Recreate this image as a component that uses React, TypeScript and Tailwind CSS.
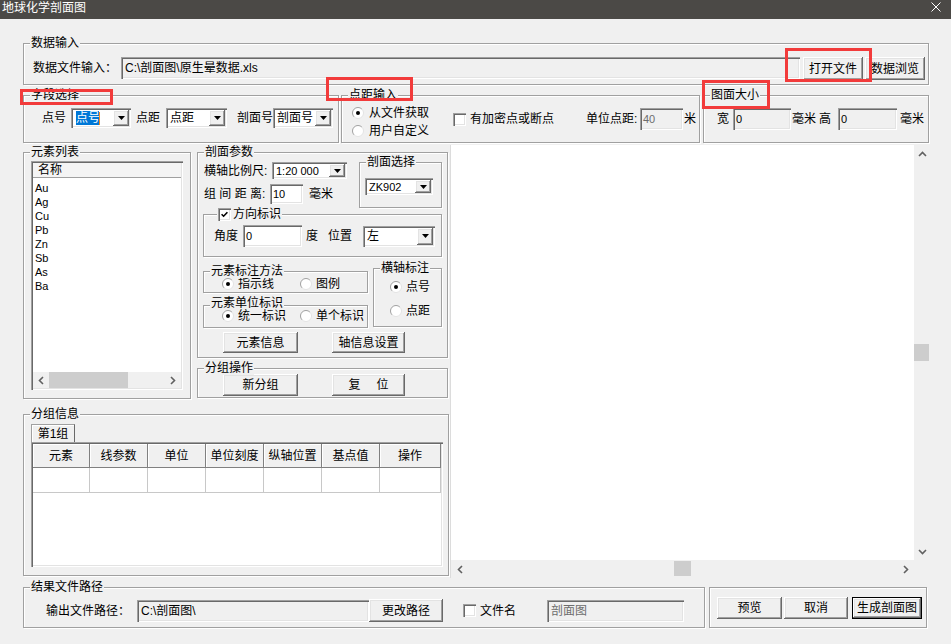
import React from 'react'

const RAISED = 'bg-[#f0f0f0] shadow-[inset_-1px_-1px_0_#696969,inset_1px_1px_0_#ffffff,inset_-2px_-2px_0_#a0a0a0,inset_2px_2px_0_#e3e3e3]'
const SUNKEN = 'shadow-[inset_1px_1px_0_#a0a0a0,inset_2px_2px_0_#696969,inset_-1px_-1px_0_#ffffff,inset_-2px_-2px_0_#e3e3e3]'

type Kids = { children?: React.ReactNode; className?: string }

function Group({ label, left = 'left-[6px]', top = '-top-[8px] h-[14px]', className = '', children }: Kids & { label?: React.ReactNode; left?: string; top?: string }) {
  return (
    <div className={`relative shrink-0 border border-[#a0a0a0] shadow-[inset_1px_1px_0_#ffffff,1px_1px_0_#ffffff] ${className}`}>
      {label && (
        <div className={`absolute ${top} ${left} flex items-center bg-[#f0f0f0] px-[1px] whitespace-nowrap`}>{label}</div>
      )}
      {children}
    </div>
  )
}

function Btn({ children, className = '' }: Kids) {
  return <div className={`shrink-0 flex items-center justify-center whitespace-nowrap ${RAISED} ${className}`}>{children}</div>
}

function Edit({ children, className = '', gray = false, dim = false }: Kids & { gray?: boolean; dim?: boolean }) {
  return (
    <div className={`shrink-0 flex items-center px-[4px] whitespace-nowrap overflow-hidden ${SUNKEN} ${gray ? 'bg-[#f0f0f0]' : 'bg-white'} ${dim ? 'text-[#6d6d6d]' : ''} ${className}`}>
      {children}
    </div>
  )
}

function Combo({ children, className = '' }: Kids) {
  return (
    <div className={`shrink-0 flex items-stretch bg-white p-[2px] ${SUNKEN} ${className}`}>
      <div className="flex-1 flex items-center pl-[2px] overflow-hidden whitespace-nowrap">{children}</div>
      <div className={`w-[16px] flex items-center justify-center ${RAISED}`}>
        <svg width="7" height="4" viewBox="0 0 7 4"><path d="M0 0h7L3.5 4z" fill="#000" /></svg>
      </div>
    </div>
  )
}

function Radio({ on = false }: { on?: boolean }) {
  return (
    <svg width="12" height="12" viewBox="0 0 12 12" className="shrink-0">
      <circle cx="6" cy="6" r="5.5" fill="#fff" />
      <path d="M2.1 9.9A5.5 5.5 0 0 1 9.9 2.1" stroke="#a0a0a0" fill="none" />
      <path d="M9.9 2.1A5.5 5.5 0 0 1 2.1 9.9" stroke="#e3e3e3" fill="none" />
      {on && <circle cx="6" cy="6" r="2" fill="#000" />}
    </svg>
  )
}

function Check({ on = false }: { on?: boolean }) {
  return (
    <div className={`w-[13px] h-[13px] shrink-0 bg-white flex items-center justify-center ${SUNKEN}`}>
      {on && (
        <svg width="7" height="7" viewBox="0 0 7 7"><path d="M0.6 3.2l2 2L6.4 1.2" stroke="#000" strokeWidth="1.6" fill="none" /></svg>
      )}
    </div>
  )
}

function Chev({ dir }: { dir: 'up' | 'down' | 'left' | 'right' }) {
  if (dir === 'up') return <svg width="9" height="6" viewBox="0 0 9 6"><path d="M1 5L4.5 1.5L8 5" stroke="#606060" strokeWidth="1.6" fill="none" /></svg>
  if (dir === 'down') return <svg width="9" height="6" viewBox="0 0 9 6"><path d="M1 1L4.5 4.5L8 1" stroke="#606060" strokeWidth="1.6" fill="none" /></svg>
  if (dir === 'left') return <svg width="6" height="9" viewBox="0 0 6 9"><path d="M5 1L1.5 4.5L5 8" stroke="#606060" strokeWidth="1.6" fill="none" /></svg>
  return <svg width="6" height="9" viewBox="0 0 6 9"><path d="M1 1L4.5 4.5L1 8" stroke="#606060" strokeWidth="1.6" fill="none" /></svg>
}

const elements = ['Au', 'Ag', 'Cu', 'Pb', 'Zn', 'Sb', 'As', 'Ba']
const columns = [
  { name: '元素', w: 'w-[57px]' },
  { name: '线参数', w: 'w-[58px]' },
  { name: '单位', w: 'w-[58px]' },
  { name: '单位刻度', w: 'w-[58px]' },
  { name: '纵轴位置', w: 'w-[58px]' },
  { name: '基点值', w: 'w-[58px]' },
  { name: '操作', w: 'w-[61px]' },
]

export default function App() {
  return (
    <div className="relative w-[951px] h-[644px] overflow-hidden bg-[#f0f0f0] text-[12px] leading-[14px] text-black font-['Liberation_Sans','Noto_Sans_CJK_SC',sans-serif]">
      {/* title bar */}
      <div className="h-[19px] bg-[#4b4946] text-white flex items-start pl-[2px] pt-[1px]">
        <span>地球化学剖面图</span>
        <svg className="ml-auto mr-[10px] mt-[1px]" width="10" height="10" viewBox="0 0 10 10">
          <path d="M0.5 0.5L9.5 9.5M9.5 0.5L0.5 9.5" stroke="#fff" strokeWidth="1" />
        </svg>
      </div>

      <div className="pl-[23px]">
        {/* 数据输入 */}
        <Group label="数据输入" className="mt-[24px] w-[906px] h-[42px] flex items-start pl-[9px] pt-[13px]">
          <span className="w-[88px] h-[22px] flex items-center shrink-0">数据文件输入：</span>
          <Edit gray className="w-[679px] h-[22px]">C:\剖面图\原生晕数据.xls</Edit>
          <Btn className="ml-[3px] w-[60px] h-[23px]">打开文件</Btn>
          <Btn className="ml-[2px] w-[60px] h-[23px]">数据浏览</Btn>
        </Group>

        {/* 字段 / 点距 / 图面 */}
        <div className="flex mt-[10px]">
          <Group label="字段选择" className="w-[316px] h-[48px] flex items-start pl-[18px] pt-[12px]">
            <div className="flex items-center h-[20px]">
              <span>点号</span>
              <Combo className="ml-[5px] w-[60px] h-[20px]">
                <span className="bg-[#0078d7] text-white w-[23px] ml-[1px]">点号</span>
                <span className="w-[1px] h-[13px] bg-[#f08a24]" />
              </Combo>
              <span className="ml-[5px]">点距</span>
              <Combo className="ml-[6px] w-[61px] h-[20px]">点距</Combo>
              <span className="ml-[10px]">剖面号</span>
              <Combo className="w-[60px] h-[20px]">剖面号</Combo>
            </div>
          </Group>

          <Group label="点距输入" className="ml-[2px] w-[359px] h-[48px] flex items-center pl-[10px]">
            <div className="flex flex-col gap-[4px] mt-[6px] w-[101px] shrink-0">
              <div className="flex items-center h-[14px]"><Radio on /><span className="ml-[5px]">从文件获取</span></div>
              <div className="flex items-center h-[14px]"><Radio /><span className="ml-[5px]">用户自定义</span></div>
            </div>
            <Check />
            <span className="ml-[4px] w-[84px] shrink-0 whitespace-nowrap">有加密点或断点</span>
            <span className="ml-[32px] w-[54px] shrink-0">单位点距:</span>
            <Edit gray dim className="w-[43px] h-[22px] !px-[3px] text-[11px]">40</Edit>
            <span className="ml-[1px]">米</span>
          </Group>

          <Group label="图面大小" className="ml-[3px] w-[226px] h-[48px] flex items-center pl-[13px]">
            <span>宽</span>
            <Edit gray className="ml-[4px] w-[58px] h-[22px] !px-[3px] text-[11px]">0</Edit>
            <span className="ml-[1px]">毫米</span>
            <span className="ml-[3px]">高</span>
            <Edit gray className="ml-[7px] w-[59px] h-[22px] !px-[3px] text-[11px]">0</Edit>
            <span className="ml-[3px]">毫米</span>
          </Group>
        </div>

        {/* main area */}
        <div className="flex mt-[2px]">
          <div className="w-[427px] shrink-0 flex flex-col">
            <div className="flex mt-[7px]">
              <Group label="元素列表" className="w-[168px] h-[247px] pl-[7px] pt-[8px]">
                <div className={`w-[152px] h-[229px] bg-white flex flex-col p-[2px] ${SUNKEN}`}>
                  <div className="h-[15px] flex items-center pl-[5px] bg-[#f4f4f4] border-b border-[#a0a0a0]">名称</div>
                  <div className="pt-[3px] text-[11px]">
                    {elements.map((e) => (
                      <div key={e} className="h-[14px] leading-[14px] pl-[2px]">{e}</div>
                    ))}
                  </div>
                  <div className="mt-auto h-[16px] flex bg-[#f0f0f0]">
                    <div className="w-[16px] flex items-center justify-center"><Chev dir="left" /></div>
                    <div className="w-[79px] bg-[#cdcdcd]" />
                    <div className="w-[16px] ml-auto flex items-center justify-center"><Chev dir="right" /></div>
                  </div>
                </div>
              </Group>

              <div className="ml-[6px] w-[251px] shrink-0 flex flex-col">
                <Group label="剖面参数" className="w-[251px] h-[206px] pt-[9px] flex flex-col">
                  <div className="flex items-start ml-[6px]">
                    <div className="flex flex-col">
                      <div className="flex items-center h-[17px]">
                        <span className="w-[68px] shrink-0">横轴比例尺:</span>
                        <Combo className="w-[75px] h-[17px] text-[11px]">1:20 000</Combo>
                      </div>
                      <div className="flex items-center h-[20px] mt-[5px]">
                        <span className="w-[66px] shrink-0 whitespace-pre">组 间 距 离:</span>
                        <Edit className="w-[33px] h-[20px] !px-[3px] text-[11px]">10</Edit>
                        <span className="ml-[6px]">毫米</span>
                      </div>
                    </div>
                    <Group label="剖面选择" className="ml-[12px] w-[83px] h-[46px] pl-[5px] pt-[15px]">
                      <Combo className="w-[68px] h-[17px] text-[11px]">ZK902</Combo>
                    </Group>
                  </div>

                  <Group
                    left="left-[13px]"
                    label={<><Check on /><span className="ml-[2px]">方向标识</span></>}
                    className="mt-[6px] ml-[5px] w-[239px] h-[43px] flex items-start pl-[10px] pt-[10px]"
                  >
                    <div className="flex items-center h-[22px]">
                      <span>角度</span>
                      <Edit className="ml-[5px] w-[59px] h-[22px] !px-[3px] text-[11px]">0</Edit>
                      <span className="ml-[4px]">度</span>
                      <span className="ml-[10px]">位置</span>
                      <Combo className="ml-[11px] w-[72px] h-[21px]">左</Combo>
                    </div>
                  </Group>

                  <div className="flex items-start mt-[11px] ml-[5px]">
                    <div className="flex flex-col mt-[3px]">
                      <Group label="元素标注方法" className="w-[165px] h-[22px] pl-[18px] pt-[5px]">
                        <div className="flex items-center h-[14px]">
                          <Radio on /><span className="ml-[4px] w-[36px]">指示线</span>
                          <span className="ml-[26px] flex"><Radio /></span><span className="ml-[4px]">图例</span>
                        </div>
                      </Group>
                      <Group label="元素单位标识" top="-top-[9px] h-[12px] leading-[12px]" className="mt-[12px] w-[165px] h-[23px] pl-[18px] pt-[3px]">
                        <div className="relative z-10 flex items-center h-[14px]">
                          <Radio on /><span className="ml-[4px] w-[48px]">统一标识</span>
                          <span className="ml-[14px] flex"><Radio /></span><span className="ml-[4px]">单个标识</span>
                        </div>
                      </Group>
                    </div>
                    <Group label="横轴标注" className="ml-[5px] w-[69px] h-[59px] pl-[16px] pt-[11px] flex flex-col gap-[10px]">
                      <div className="flex items-center h-[14px]"><Radio on /><span className="ml-[4px]">点号</span></div>
                      <div className="flex items-center h-[14px]"><Radio /><span className="ml-[4px]">点距</span></div>
                    </Group>
                  </div>

                  <div className="flex mt-[4px] ml-[25px]">
                    <Btn className="w-[75px] h-[21px]">元素信息</Btn>
                    <Btn className="ml-[34px] w-[73px] h-[21px]">轴信息设置</Btn>
                  </div>
                </Group>

                <Group label="分组操作" className="mt-[10px] w-[251px] h-[30px] pl-[25px] pt-[5px] flex items-start">
                  <Btn className="w-[75px] h-[22px]">新分组</Btn>
                  <Btn className="ml-[34px] w-[73px] h-[22px] gap-[16px]"><span>复</span><span>位</span></Btn>
                </Group>
              </div>
            </div>

            <Group label="分组信息" className="mt-[15px] w-[426px] h-[162px] pl-[7px] pt-[9px] flex flex-col">
              <div className="w-[44px] h-[18px] flex items-center justify-center border border-b-0 border-[#a0a0a0] border-r-[#696969] shadow-[inset_1px_1px_0_#ffffff]">
                第1组
              </div>
              <div className={`w-[412px] h-[125px] bg-white p-[2px] ${SUNKEN}`}>
                <div className="flex h-[24px]">
                  {columns.map((c) => (
                    <div key={c.name} className={`${c.w} shrink-0 flex items-center justify-center bg-[#f0f0f0] border-r border-b border-[#808080] shadow-[inset_1px_1px_0_#ffffff]`}>
                      {c.name}
                    </div>
                  ))}
                </div>
                <div className="flex h-[25px]">
                  {columns.map((c) => (
                    <div key={c.name} className={`${c.w} shrink-0 bg-white border-r border-b border-[#c8c8c8]`} />
                  ))}
                </div>
              </div>
            </Group>
          </div>

          {/* drawing canvas */}
          <div className="w-[481px] h-[433px] shrink-0 border-l border-[#dcdcdc] grid grid-cols-[463px_17px] grid-rows-[415px_18px]">
            <div className="bg-white" />
            <div className="flex flex-col bg-[#f0f0f0]">
              <div className="h-[17px] flex items-center justify-center"><Chev dir="up" /></div>
              <div className="mt-[182px] w-[15px] h-[17px] bg-[#cdcdcd]" />
              <div className="mt-auto h-[17px] flex items-center justify-center"><Chev dir="down" /></div>
            </div>
            <div className="flex items-start bg-[#f0f0f0]">
              <div className="w-[17px] h-[18px] flex items-center justify-center"><Chev dir="left" /></div>
              <div className="ml-[206px] mt-[1px] w-[17px] h-[15px] bg-[#cdcdcd]" />
              <div className="ml-auto w-[17px] h-[18px] flex items-center justify-center"><Chev dir="right" /></div>
            </div>
            <div className="bg-[#f0f0f0]" />
          </div>
        </div>

        {/* bottom */}
        <div className="flex mt-[9px]">
          <Group label="结果文件路径" className="w-[682px] h-[41px] pl-[22px] pt-[11px] flex items-start">
            <div className="flex items-center h-[23px]">
              <span className="w-[91px] shrink-0">输出文件路径：</span>
              <Edit gray className="w-[232px] h-[22px]">C:\剖面图\</Edit>
              <Btn className="w-[74px] h-[23px]">更改路径</Btn>
              <span className="ml-[20px] flex"><Check /></span>
              <span className="ml-[4px]">文件名</span>
              <Edit gray dim className="ml-[31px] w-[137px] h-[22px]">剖面图</Edit>
            </div>
          </Group>
          <Group className="ml-[4px] w-[218px] h-[41px] pl-[7px] pt-[9px] flex items-start">
            <Btn className="w-[65px] h-[22px]">预览</Btn>
            <Btn className="ml-[2px] w-[64px] h-[22px]">取消</Btn>
            <Btn className="ml-[4px] w-[70px] h-[22px] border border-black">生成剖面图</Btn>
          </Group>
        </div>
      </div>

      {/* red annotation boxes */}
      <div className="absolute left-[785px] top-[48px] w-[87px] h-[34px] border-[3px] border-[#f23b3b]" />
      <div className="absolute left-[20px] top-[89px] w-[93px] h-[16px] border-[3px] border-[#f23b3b]" />
      <div className="absolute left-[326px] top-[77px] w-[87px] h-[24px] border-[3px] border-[#f23b3b]" />
      <div className="absolute left-[702px] top-[80px] w-[68px] h-[29px] border-[3px] border-[#f23b3b]" />
    </div>
  )
}
